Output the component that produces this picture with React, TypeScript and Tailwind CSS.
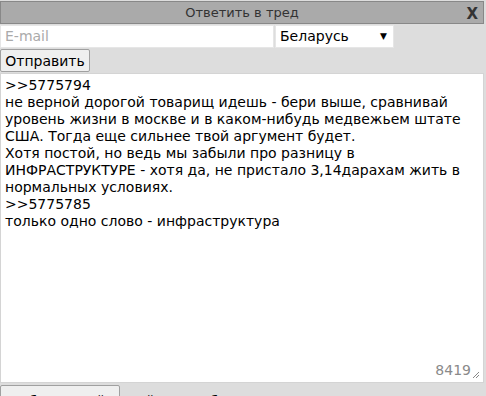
import React from "react";

const text = `>>5775794
не верной дорогой товарищ идешь - бери выше, сравнивай уровень жизни в москве и в каком-нибудь медвежьем штате США. Тогда еще сильнее твой аргумент будет.
Хотя постой, но ведь мы забыли про разницу в ИНФРАСТРУКТУРЕ - хотя да, не пристало 3,14дарахам жить в нормальных условиях.
>>5775785
только одно слово - инфраструктура`;

const App = () => {
  return (
    <div className="w-[486px] h-[396px] overflow-hidden bg-[#dddddd] pt-[1px] font-['DejaVu_Sans',Verdana,sans-serif] text-[14px]">
      <div className="w-[484px]">
        {/* Header */}
        <div className="relative h-[23px] bg-[#aaaaaa] border border-[#888888] flex items-center justify-center text-[#333333] text-[13px]">
          Ответить в тред
          <span className="absolute right-[5px] top-[1px] font-bold text-[15px] text-[#333333]">X</span>
        </div>

        {/* Email + country */}
        <div className="flex mt-[1px] h-[23px]">
          <div className="w-[274px] h-full bg-white border border-[#e6e6e6] flex items-center pl-[4px] text-[#aaaaaa]">
            E-mail
          </div>
          <div className="ml-[1px] w-[119px] h-full bg-white border border-[#e6e6e6] flex items-center justify-between pl-[4px] pr-[6px] text-black">
            <span>Беларусь</span>
            <span className="text-[9px]">▼</span>
          </div>
        </div>

        {/* Submit */}
        <div className="mt-[1px]">
          <button className="h-[23px] w-[90px] bg-[#efefef] border border-[#a0a0a0] rounded-[2px] text-black leading-none">
            Отправить
          </button>
        </div>

        {/* Message */}
        <div className="relative mt-[1px] h-[310px] bg-white border border-[#d4d4d4]">
          <div className="px-[4px] pt-[3px] leading-[17px] text-black whitespace-pre-wrap">
            {text}
          </div>
          <span className="absolute right-[12px] bottom-[1px] text-[#8a8a8a]">8419</span>
          <svg className="absolute right-[3px] bottom-[3px]" width="8" height="8" viewBox="0 0 8 8">
            <path d="M7 1 L1 7 M7 4 L4 7" stroke="#888" strokeWidth="1" />
          </svg>
        </div>

        {/* File input */}
        <div className="flex items-start mt-[2px] text-black">
          <div className="w-[120px] h-[20px] bg-[#efefef] border border-[#a0a0a0] rounded-[2px] pt-[8px] pl-[7px] leading-none">
            Выбрать файл
          </div>
          <div className="pl-[5px] pt-[9px] leading-none">Файл не выбран</div>
        </div>
      </div>
    </div>
  );
};

export default App;
